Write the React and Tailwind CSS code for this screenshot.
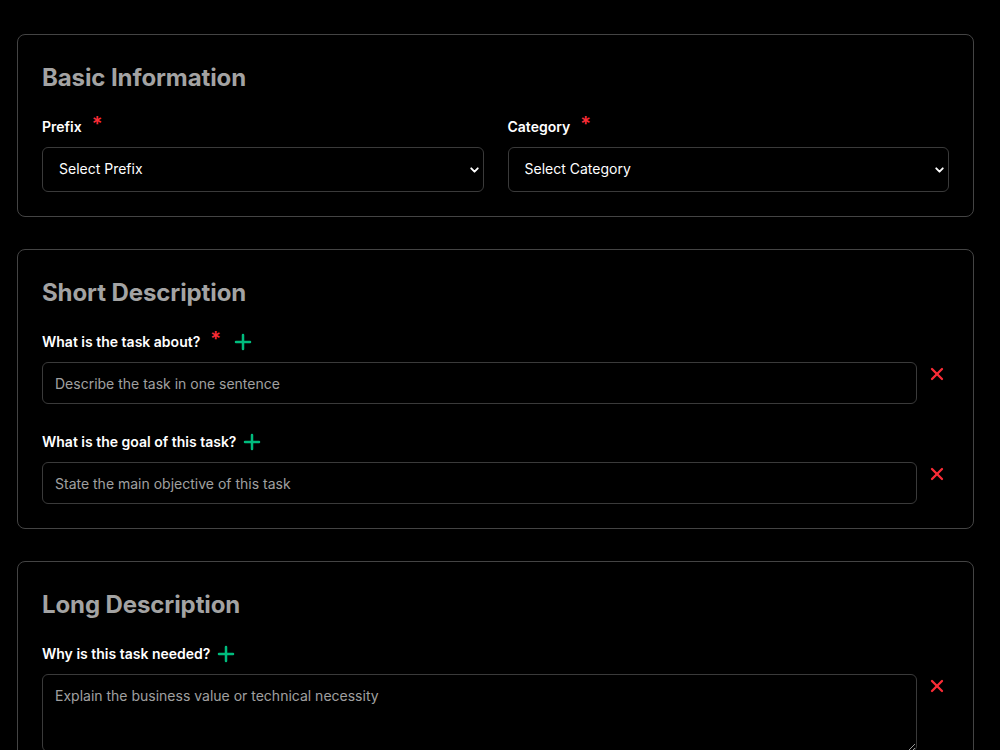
import React from 'react'
import { Plus, X, ChevronDown } from 'lucide-react'

const Card = ({ title, children }) => (
    <section className="rounded-lg border border-[#444444] bg-black p-6">
        <h2 className="mb-[21px] mt-[3px] text-2xl font-bold leading-8 tracking-[-0.1px] text-[#a3a3a3]">{title}</h2>
        {children}
    </section>
)

const Label = ({ text, required, addable }) => (
    <div className="mb-2 flex h-6 items-center">
        <span className="text-sm font-semibold text-white">{text}</span>
        {required && (
            <span className="ml-[10px] -translate-y-[3px] text-xl font-semibold leading-none text-red-500">*</span>
        )}
        {addable && (
            <button type="button" className={required ? 'ml-[10px] text-emerald-500' : 'ml-1 text-emerald-500'}>
                <Plus size={24} strokeWidth={2.5} />
            </button>
        )}
    </div>
)

const SelectBox = ({ placeholder }) => (
    <div className="relative">
        <select className="h-[45px] w-full appearance-none rounded-md border border-[#3a3a3a] bg-black px-4 pb-px text-sm text-white outline-none">
            <option>{placeholder}</option>
        </select>
        <ChevronDown
            size={13}
            strokeWidth={3.5}
            className="pointer-events-none absolute right-[3px] top-1/2 -translate-y-1/2 text-white"
        />
    </div>
)

const RemoveButton = () => (
    <button type="button" className="flex h-6 w-6 shrink-0 items-center justify-center text-red-500">
        <X size={20} strokeWidth={2.75} />
    </button>
)

const InputRow = ({ placeholder }) => (
    <div className="flex items-start gap-2">
        <input
            placeholder={placeholder}
            className="h-[42px] flex-1 rounded-md border border-[#3a3a3a] bg-black px-3 text-sm text-white placeholder-[#a0a0a0] outline-none"
        />
        <RemoveButton />
    </div>
)

export default function App() {
    return (
        <div className="min-h-screen bg-black pl-[17px] pt-[34px] font-['Inter','Liberation_Sans',sans-serif]">
            <div className="w-[957px] space-y-8 pb-10">
                <Card title="Basic Information">
                    <div className="grid grid-cols-2 gap-6">
                        <div>
                            <Label text="Prefix" required />
                            <SelectBox placeholder="Select Prefix" />
                        </div>
                        <div>
                            <Label text="Category" required />
                            <SelectBox placeholder="Select Category" />
                        </div>
                    </div>
                </Card>

                <Card title="Short Description">
                    <div className="space-y-[26px]">
                        <div>
                            <Label text="What is the task about?" required addable />
                            <InputRow placeholder="Describe the task in one sentence" />
                        </div>
                        <div>
                            <Label text="What is the goal of this task?" addable />
                            <InputRow placeholder="State the main objective of this task" />
                        </div>
                    </div>
                </Card>

                <Card title="Long Description">
                    <div>
                        <Label text="Why is this task needed?" addable />
                        <div className="flex items-start gap-2">
                            <textarea
                                placeholder="Explain the business value or technical necessity"
                                className="h-[78px] flex-1 rounded-md border border-[#3a3a3a] bg-black px-3 pb-3 pt-[11px] text-sm leading-5 text-white placeholder-[#a0a0a0] outline-none"
                            />
                            <RemoveButton />
                        </div>
                    </div>
                </Card>
            </div>
        </div>
    )
}
